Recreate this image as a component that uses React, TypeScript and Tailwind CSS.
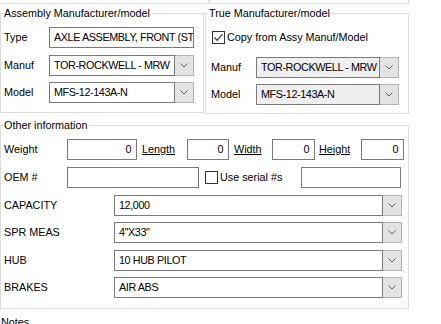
import React from 'react'

const font = "font-['Liberation_Sans',Arial,sans-serif] text-[10.8px] leading-[15px] text-black"

function Chevron() {
  return (
    <svg width="8" height="5" viewBox="0 0 8 5" fill="none">
      <path d="M0.5 0.5 L4 4 L7.5 0.5" stroke="#606060" strokeWidth="1" />
    </svg>
  )
}

function TextBox({ value = '', className = '', right = false }: { value?: string; className?: string; right?: boolean }) {
  return (
    <div
      className={`h-[21px] border border-[#7a7a7a] bg-white flex items-center overflow-hidden whitespace-nowrap tracking-[-0.4px] ${
        right ? 'justify-end pr-[5px]' : 'pl-[4px]'
      } ${className}`}
    >
      {value}
    </div>
  )
}

function Combo({ value, className = '', disabled = false }: { value: string; className?: string; disabled?: boolean }) {
  return (
    <div className={`flex h-[21px] ${className}`}>
      <div
        className={`flex-1 min-w-0 border border-[#7a7a7a] flex items-center pl-[4px] overflow-hidden whitespace-nowrap tracking-[-0.4px] ${
          disabled ? 'bg-[#efefef]' : 'bg-white'
        }`}
      >
        {value}
      </div>
      <div className="w-[19px] border-y border-r border-[#b4b4b4] bg-[#e3e3e3] flex items-center justify-center">
        <Chevron />
      </div>
    </div>
  )
}

function Check({ checked = false }: { checked?: boolean }) {
  return (
    <div className="w-[13px] h-[13px] border border-[#333] bg-white flex items-center justify-center shrink-0">
      {checked && (
        <svg width="11" height="11" viewBox="0 0 11 11" fill="none">
          <path d="M1.5 5.5 L4.2 8.3 L9.5 2.2" stroke="#333" strokeWidth="1.2" />
        </svg>
      )}
    </div>
  )
}

function Group({ title, className = '', children }: { title: string; className?: string; children: React.ReactNode }) {
  return (
    <fieldset className={`border border-[#dcdcdc] ${className}`}>
      <legend className="ml-[2px] px-[1px]">{title}</legend>
      {children}
    </fieldset>
  )
}

const dropdowns = [
  { label: 'CAPACITY', value: '12,000', mt: 'mt-[7px]' },
  { label: 'SPR MEAS', value: '4"X33"', mt: 'mt-[6px]' },
  { label: 'HUB', value: '10 HUB  PILOT', mt: 'mt-[7px]' },
  { label: 'BRAKES', value: 'AIR ABS', mt: 'mt-[6px]' },
]

export default function App() {
  return (
    <div className={`w-[441px] h-[324px] overflow-hidden bg-white ${font}`}>
      {/* bottom edge of the panels above */}
      <div className="flex h-[4px]">
        <div className="w-[209px] border-b border-r border-[#dcdcdc]" />
        <div className="ml-[1px] w-[199px] border-b border-x border-[#dcdcdc]" />
      </div>

      <div className="flex mt-[2px]">
        <Group title="Assembly Manufacturer/model" className="w-[204px] h-[107px]">
          <div className="flex flex-col gap-[7px] pt-[6px] pl-[3px]">
            <div className="flex items-center">
              <span className="w-[45px]">Type</span>
              <TextBox value="AXLE ASSEMBLY, FRONT (STEER)" className="w-[145px]" />
            </div>
            <div className="flex items-center">
              <span className="w-[45px]">Manuf</span>
              <Combo value="TOR-ROCKWELL - MRW" className="w-[145px]" />
            </div>
            <div className="flex items-center -mt-[1px]">
              <span className="w-[45px]">Model</span>
              <Combo value="MFS-12-143A-N" className="w-[145px]" />
            </div>
          </div>
        </Group>

        <Group title="True Manufacturer/model" className="ml-[1px] w-[204px] h-[108px]">
          <div className="flex flex-col pl-[5px]">
            <div className="flex items-center gap-[2px] pt-[9px] pl-[1px]">
              <Check checked />
              <span>Copy from Assy Manuf/Model</span>
            </div>
            <div className="flex items-center mt-[12px]">
              <span className="w-[45px]">Manuf</span>
              <Combo value="TOR-ROCKWELL - MRW" className="w-[143px]" disabled />
            </div>
            <div className="flex items-center mt-[6px]">
              <span className="w-[45px]">Model</span>
              <Combo value="MFS-12-143A-N" className="w-[143px]" disabled />
            </div>
          </div>
        </Group>
      </div>

      <Group title="Other information" className="mt-[4px] w-[409px] h-[191px]">
        <div className="flex flex-col pt-[6px] pl-[3px]">
          <div className="flex items-center">
            <span className="w-[63px]">Weight</span>
            <TextBox value="0" right className="w-[70px]" />
            <span className="w-[50px] pl-[5px] underline">Length</span>
            <TextBox value="0" right className="w-[42px]" />
            <span className="w-[43px] pl-[5px] underline">Width</span>
            <TextBox value="0" right className="w-[43px]" />
            <span className="w-[46px] pl-[4px] underline">Height</span>
            <TextBox value="0" right className="w-[43px]" />
          </div>
          <div className="flex items-center mt-[7px]">
            <span className="w-[63px]">OEM #</span>
            <TextBox className="w-[132px]" />
            <div className="ml-[6px]">
              <Check />
            </div>
            <span className="w-[83px] pl-[2px]">Use serial #s</span>
            <TextBox className="w-[100px]" />
          </div>
          {dropdowns.map((d) => (
            <div key={d.label} className={`flex items-center ${d.mt}`}>
              <span className="w-[110px]">{d.label}</span>
              <Combo value={d.value} className="w-[288px]" />
            </div>
          ))}
        </div>
      </Group>

      <div className="mt-[6px] pl-[1px]">Notes</div>
    </div>
  )
}
